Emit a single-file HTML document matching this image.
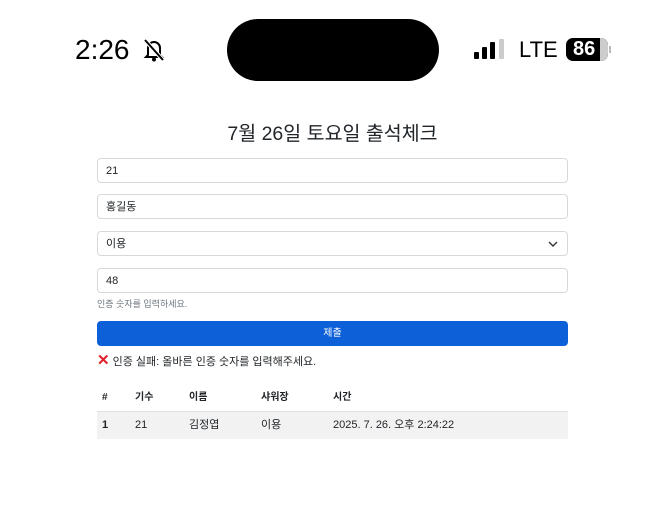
<!DOCTYPE html>
<html><head><meta charset="utf-8"><style>
*{box-sizing:border-box;margin:0;padding:0}
body{width:665px;height:522px;background:#fff;font-family:"Liberation Sans","Noto Sans CJK KR",sans-serif;color:#212529;position:relative;overflow:hidden}
.a{position:absolute}
.inp{position:absolute;left:97px;width:471px;height:25px;border:1px solid #d6d9dc;border-radius:4px;font-size:11px;padding-left:8px;line-height:24px}
</style></head><body>
<div class="a" style="left:75px;top:34px;font-size:28px;font-weight:500;color:#000">2:26</div>
<svg class="a" style="left:142px;top:37px" width="24" height="26" viewBox="0 0 24 26"><path d="M6 18 V11 a6 6 0 0 1 12 0 V18 L20 20 H4 Z" fill="none" stroke="#000" stroke-width="2"/><circle cx="12" cy="22.5" r="2" fill="#000"/><path d="M3 3 L21 23" stroke="#fff" stroke-width="4"/><path d="M3 3 L21 23" stroke="#000" stroke-width="2"/></svg>
<div class="a" style="left:227px;top:19px;width:212px;height:62px;background:#000;border-radius:31px"></div>
<div class="a" style="left:474px;top:52px;width:5px;height:7px;background:#000;border-radius:1px"></div>
<div class="a" style="left:482px;top:47px;width:5px;height:12px;background:#000;border-radius:1px"></div>
<div class="a" style="left:490px;top:42px;width:5px;height:17px;background:#000;border-radius:1px"></div>
<div class="a" style="left:499px;top:39px;width:5px;height:20px;background:#ccc;border-radius:1px"></div>
<div class="a" style="left:519px;top:37px;font-size:22px;color:#000">LTE</div>
<div class="a" style="left:566px;top:38px;width:42px;height:23px;background:#000;border-radius:7px;color:#fff;font-size:20px;font-weight:700;line-height:23px;padding-left:7px">86</div>
<div class="a" style="left:600px;top:38px;width:8px;height:23px;background:#ccc;border-radius:0 7px 7px 0"></div>
<div class="a" style="left:609px;top:46px;width:2px;height:7px;background:#bbb"></div>
<div class="a" style="left:0;width:665px;top:117px;text-align:center;font-size:19.5px">7월 26일 토요일 출석체크</div>
<div class="inp" style="top:158px">21</div>
<div class="inp" style="top:194px">홍길동</div>
<div class="inp" style="top:231px">이용<svg class="a" style="right:9px;top:9px" width="10" height="7" viewBox="0 0 10 7"><path d="M1 1 L5 5 L9 1" stroke="#333" stroke-width="1.4" fill="none"/></svg></div>
<div class="inp" style="top:268px">48</div>
<div class="a" style="left:97px;top:297px;font-size:9px;color:#6c757d">인증 숫자를 입력하세요.</div>
<div class="a" style="left:97px;top:321px;width:471px;height:25px;background:#0d60d8;border-radius:4px;color:#fff;font-size:10px;text-align:center;line-height:25px">제출</div>
<div class="a" style="left:97px;top:353px;font-size:11px"><span style="color:#e0202a;font-weight:700;font-size:15px;line-height:14px">✕</span> 인증 실패: 올바른 인증 숫자를 입력해주세요.</div>
<div class="a" style="left:97px;top:388px;width:471px;height:24px;font-size:10px;font-weight:700;line-height:20px">
<span class="a" style="left:5px">#</span><span class="a" style="left:38px">기수</span><span class="a" style="left:92px">이름</span><span class="a" style="left:164px">샤워장</span><span class="a" style="left:236px">시간</span></div>
<div class="a" style="left:97px;top:411px;width:471px;height:1px;background:#dee2e6"></div>
<div class="a" style="left:97px;top:412px;width:471px;height:27px;background:#f2f2f2;font-size:11px;line-height:27px">
<span class="a" style="left:5px;font-weight:700">1</span><span class="a" style="left:38px">21</span><span class="a" style="left:92px">김정엽</span><span class="a" style="left:164px">이용</span><span class="a" style="left:236px">2025. 7. 26. 오후 2:24:22</span></div>
</body></html>
